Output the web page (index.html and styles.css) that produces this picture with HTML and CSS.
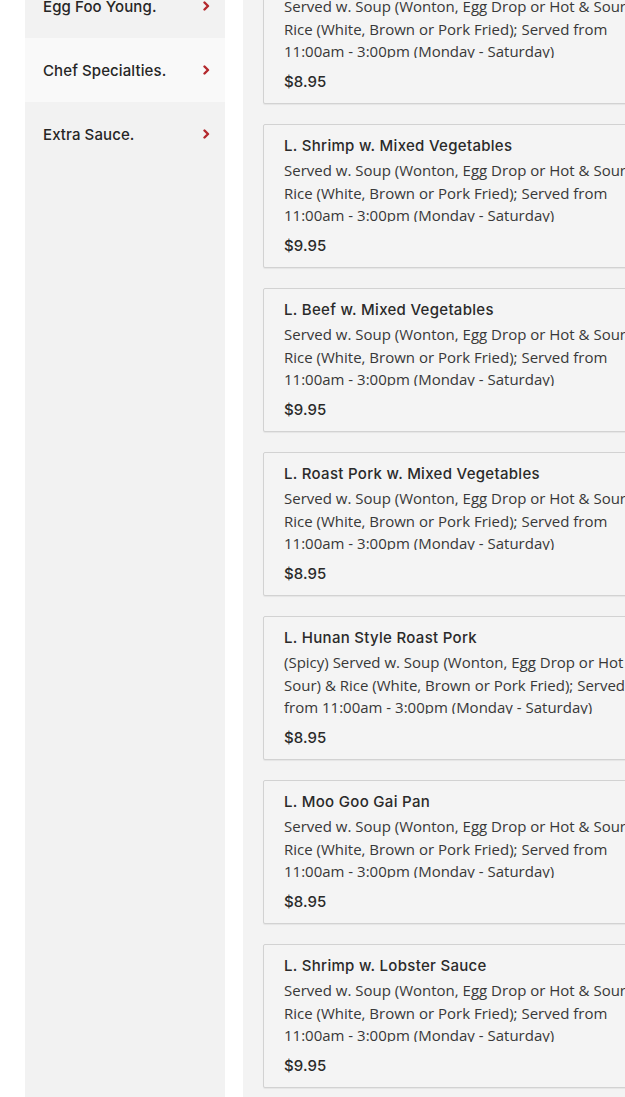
FILE: index.html
```html
<!DOCTYPE html>
<html lang="en">
<head>
<meta charset="utf-8">
<title>Lunch Menu</title>
<link rel="stylesheet" href="styles.css">
</head>
<body>
<div class="page">
  <aside class="sidebar">
    <a class="cat" href="#">Egg Foo Young.<svg class="chev" viewBox="0 0 8 10" width="8" height="10"><polyline points="2.5,1.5 6,5 2.5,8.5"/></svg></a>
    <a class="cat active" href="#">Chef Specialties.<svg class="chev" viewBox="0 0 8 10" width="8" height="10"><polyline points="2.5,1.5 6,5 2.5,8.5"/></svg></a>
    <a class="cat" href="#">Extra Sauce.<svg class="chev" viewBox="0 0 8 10" width="8" height="10"><polyline points="2.5,1.5 6,5 2.5,8.5"/></svg></a>
  </aside>
  <main class="menu">
    <div class="item">
      <h3 class="name">L. Chicken w. Mixed Vegetables</h3>
      <p class="desc">Served w. Soup (Wonton, Egg Drop or Hot &amp; Sour) &amp; Rice (White, Brown or Pork Fried); Served from 11:00am - 3:00pm (Monday - Saturday)</p>
      <div class="price">$8.95</div>
    </div>
    <div class="item">
      <h3 class="name">L. Shrimp w. Mixed Vegetables</h3>
      <p class="desc">Served w. Soup (Wonton, Egg Drop or Hot &amp; Sour) &amp; Rice (White, Brown or Pork Fried); Served from 11:00am - 3:00pm (Monday - Saturday)</p>
      <div class="price">$9.95</div>
    </div>
    <div class="item">
      <h3 class="name">L. Beef w. Mixed Vegetables</h3>
      <p class="desc">Served w. Soup (Wonton, Egg Drop or Hot &amp; Sour) &amp; Rice (White, Brown or Pork Fried); Served from 11:00am - 3:00pm (Monday - Saturday)</p>
      <div class="price">$9.95</div>
    </div>
    <div class="item">
      <h3 class="name">L. Roast Pork w. Mixed Vegetables</h3>
      <p class="desc">Served w. Soup (Wonton, Egg Drop or Hot &amp; Sour) &amp; Rice (White, Brown or Pork Fried); Served from 11:00am - 3:00pm (Monday - Saturday)</p>
      <div class="price">$8.95</div>
    </div>
    <div class="item">
      <h3 class="name">L. Hunan Style Roast Pork</h3>
      <p class="desc">(Spicy) Served w. Soup (Wonton, Egg Drop or Hot &amp; Sour) &amp; Rice (White, Brown or Pork Fried); Served from 11:00am - 3:00pm (Monday - Saturday)</p>
      <div class="price">$8.95</div>
    </div>
    <div class="item">
      <h3 class="name">L. Moo Goo Gai Pan</h3>
      <p class="desc">Served w. Soup (Wonton, Egg Drop or Hot &amp; Sour) &amp; Rice (White, Brown or Pork Fried); Served from 11:00am - 3:00pm (Monday - Saturday)</p>
      <div class="price">$8.95</div>
    </div>
    <div class="item">
      <h3 class="name">L. Shrimp w. Lobster Sauce</h3>
      <p class="desc">Served w. Soup (Wonton, Egg Drop or Hot &amp; Sour) &amp; Rice (White, Brown or Pork Fried); Served from 11:00am - 3:00pm (Monday - Saturday)</p>
      <div class="price">$9.95</div>
    </div>
  </main>
</div>
</body>
</html>
```

FILE: styles.css
```css
html, body {
  margin: 0;
  padding: 0;
  background: #ffffff;
  overflow: hidden;
}
body {
  width: 625px;
  height: 1097px;
}
.page {
  display: flex;
  align-items: flex-start;
  gap: 18px;
  padding-left: 25px;
  width: 720px;
}
.sidebar {
  width: 200px;
  flex: 0 0 200px;
  background: #f2f2f2;
  margin-top: -26px;
  height: 1200px;
  display: flex;
  flex-direction: column;
}
.cat {
  display: flex;
  align-items: center;
  justify-content: space-between;
  height: 64px;
  padding: 0 15px 0 18px;
  color: #262626;
  text-decoration: none;
  font-family: Inter, "Liberation Sans", sans-serif;
  font-weight: 500;
  font-size: 15px;
  letter-spacing: 0.1px;
}
.cat.active {
  background: #f9f9f9;
}
.chev polyline {
  fill: none;
  stroke: #b3282d;
  stroke-width: 2.4;
  stroke-linecap: round;
  stroke-linejoin: round;
}
.menu {
  flex: 0 0 452px;
  background: #f3f3f3;
  margin-top: -60px;
  padding: 20px 0 40px 20px;
  display: flex;
  flex-direction: column;
  gap: 20px;
}
.item {
  border: 1px solid #d2d2d2;
  border-radius: 2px;
  background: #f4f4f4;
  box-shadow: 0 1px 1px rgba(0,0,0,0.06);
  padding: 11px 20px 11px 20px;
  width: 370px;
}
.name {
  margin: 0 0 3px 0;
  font-family: Inter, "Liberation Sans", sans-serif;
  font-weight: 500;
  font-size: 15px;
  line-height: 20px;
  color: #2a2a2a;
  letter-spacing: 0.3px;
}
.desc {
  margin: 0;
  font-family: "Open Sans", sans-serif;
  font-size: 15px;
  line-height: 22.5px;
  color: #383838;
  max-height: 63px;
  overflow: hidden;
}
.price {
  margin-top: 14px;
  font-family: Inter, "Liberation Sans", sans-serif;
  font-weight: 500;
  font-size: 15px;
  line-height: 20px;
  color: #2a2a2a;
  letter-spacing: 0.1px;
}
```
